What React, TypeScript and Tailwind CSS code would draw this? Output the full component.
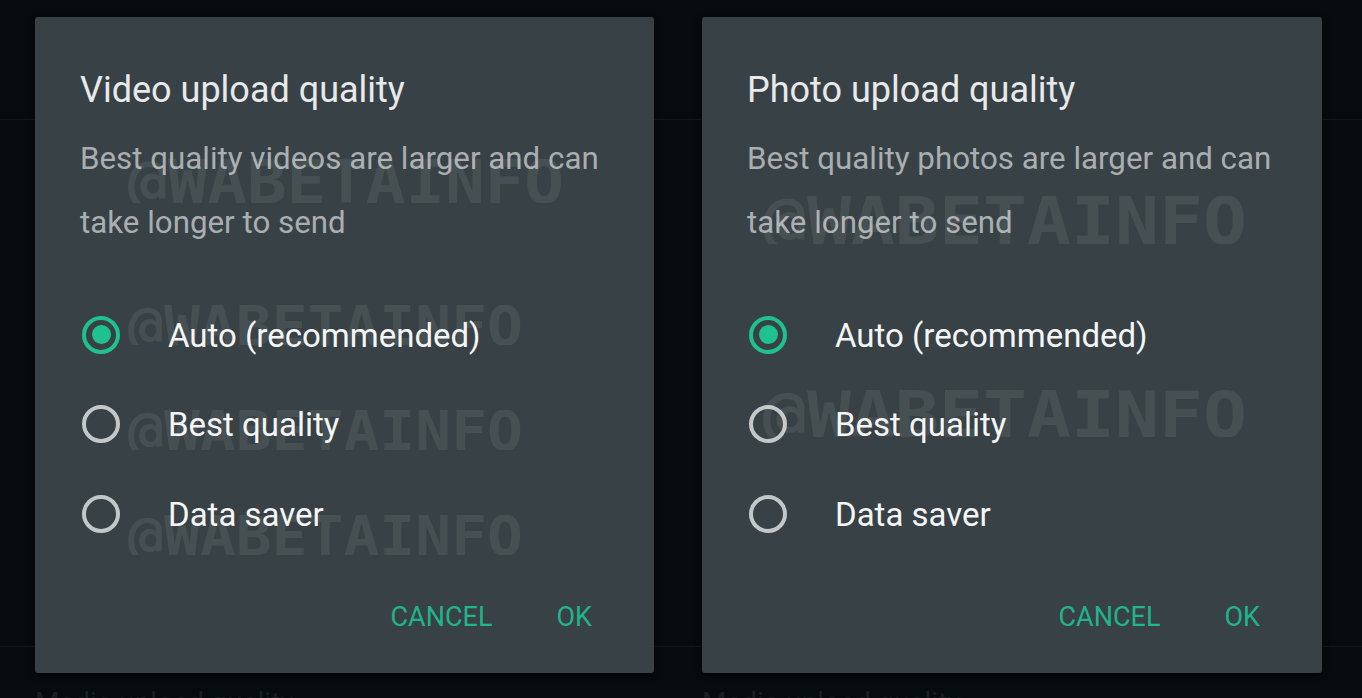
import React from "react";

type Mark = { x: number; y: number; w: number; h: number };

function Watermark({ x, y, w, h }: Mark) {
  return (
    <svg
      className="pointer-events-none absolute"
      style={{ left: x, top: y }}
      width={w}
      height={h}
      viewBox={`0 0 ${w} ${h}`}
    >
      <text
        x={0}
        y={h}
        textLength={w}
        lengthAdjust="spacingAndGlyphs"
        fill="rgba(255,255,255,0.075)"
        fontFamily="'DejaVu Sans Mono', monospace"
        fontWeight={700}
        fontSize={h * 1.37}
      >
        @WABETAINFO
      </text>
    </svg>
  );
}

function Radio({ checked }: { checked: boolean }) {
  return checked ? (
    <div className="ml-[2px] flex h-[38px] w-[38px] shrink-0 items-center justify-center rounded-full border-4 border-[#1fc18f]">
      <div className="h-[19px] w-[19px] rounded-full bg-[#1fc18f]" />
    </div>
  ) : (
    <div className="ml-[2px] h-[38px] w-[38px] shrink-0 rounded-full border-4 border-[#c4c7c8]" />
  );
}

function Dialog({
  title,
  desc1,
  desc2,
  width,
  marks,
}: {
  title: string;
  desc1: string;
  desc2: string;
  width: string;
  marks: Mark[];
}) {
  const options = ["Auto (recommended)", "Best quality", "Data saver"];
  return (
    <div
      className={`relative flex h-[656px] ${width} flex-col rounded-[3px] bg-[#384145] pl-[45px] font-['Roboto',sans-serif] shadow-[0_2px_6px_rgba(0,0,0,0.5)]`}
    >
      <div className="pt-[51px] text-[36px] leading-[44px] text-[#e8e9ea]">{title}</div>
      <div className="mt-[15px] text-[31.3px] leading-[64px] text-[#a9aeb1]">
        <div>{desc1}</div>
        <div>{desc2}</div>
      </div>
      <div className="mt-[35px] flex flex-col">
        {options.map((o, i) => (
          <div key={o} className="flex h-[89.5px] items-center">
            <Radio checked={i === 0} />
            <span className="ml-[48px] pt-[2px] text-[33px] leading-[40px] text-[#f4f5f5]">{o}</span>
          </div>
        ))}
      </div>
      <div className="mt-auto flex justify-end gap-[64px] pb-[40px] pr-[62px] text-[27px] leading-[32px] text-[#21b48c]">
        <span>CANCEL</span>
        <span>OK</span>
      </div>
      {marks.map((m, i) => (
        <Watermark key={i} {...m} />
      ))}
    </div>
  );
}

export default function App() {
  return (
    <div className="relative h-[698px] w-[1362px] overflow-hidden bg-[#060b0d] font-['Roboto',sans-serif]">
      {/* background page */}
      <div className="flex h-full flex-col">
        <div className="h-[120px] shrink-0 border-b border-[#12181a]" />
        <div className="h-[527px] shrink-0 border-b border-[#12181a]" />
        <div className="flex gap-[48px] pl-[35px] pt-[40px]">
          <div className="w-[619px] text-[28px] leading-[32px] text-[#182023]">Media upload quality</div>
          <div className="w-[620px] text-[28px] leading-[32px] text-[#182023]">Media upload quality</div>
        </div>
      </div>
      {/* dialogs */}
      <div className="absolute inset-0 flex items-start gap-[48px] pl-[35px] pt-[17px]">
        <Dialog
          title="Video upload quality"
          desc1="Best quality videos are larger and can"
          desc2="take longer to send"
          width="w-[619px]"
          marks={[
            { x: 93, y: 142, w: 436, h: 44 },
            { x: 93, y: 288, w: 395, h: 40 },
            { x: 93, y: 393, w: 395, h: 40 },
            { x: 93, y: 498, w: 395, h: 40 },
          ]}
        />
        <Dialog
          title="Photo upload quality"
          desc1="Best quality photos are larger and can"
          desc2="take longer to send"
          width="w-[620px]"
          marks={[
            { x: 61, y: 179, w: 484, h: 48 },
            { x: 61, y: 373, w: 484, h: 47 },
          ]}
        />
      </div>
    </div>
  );
}
